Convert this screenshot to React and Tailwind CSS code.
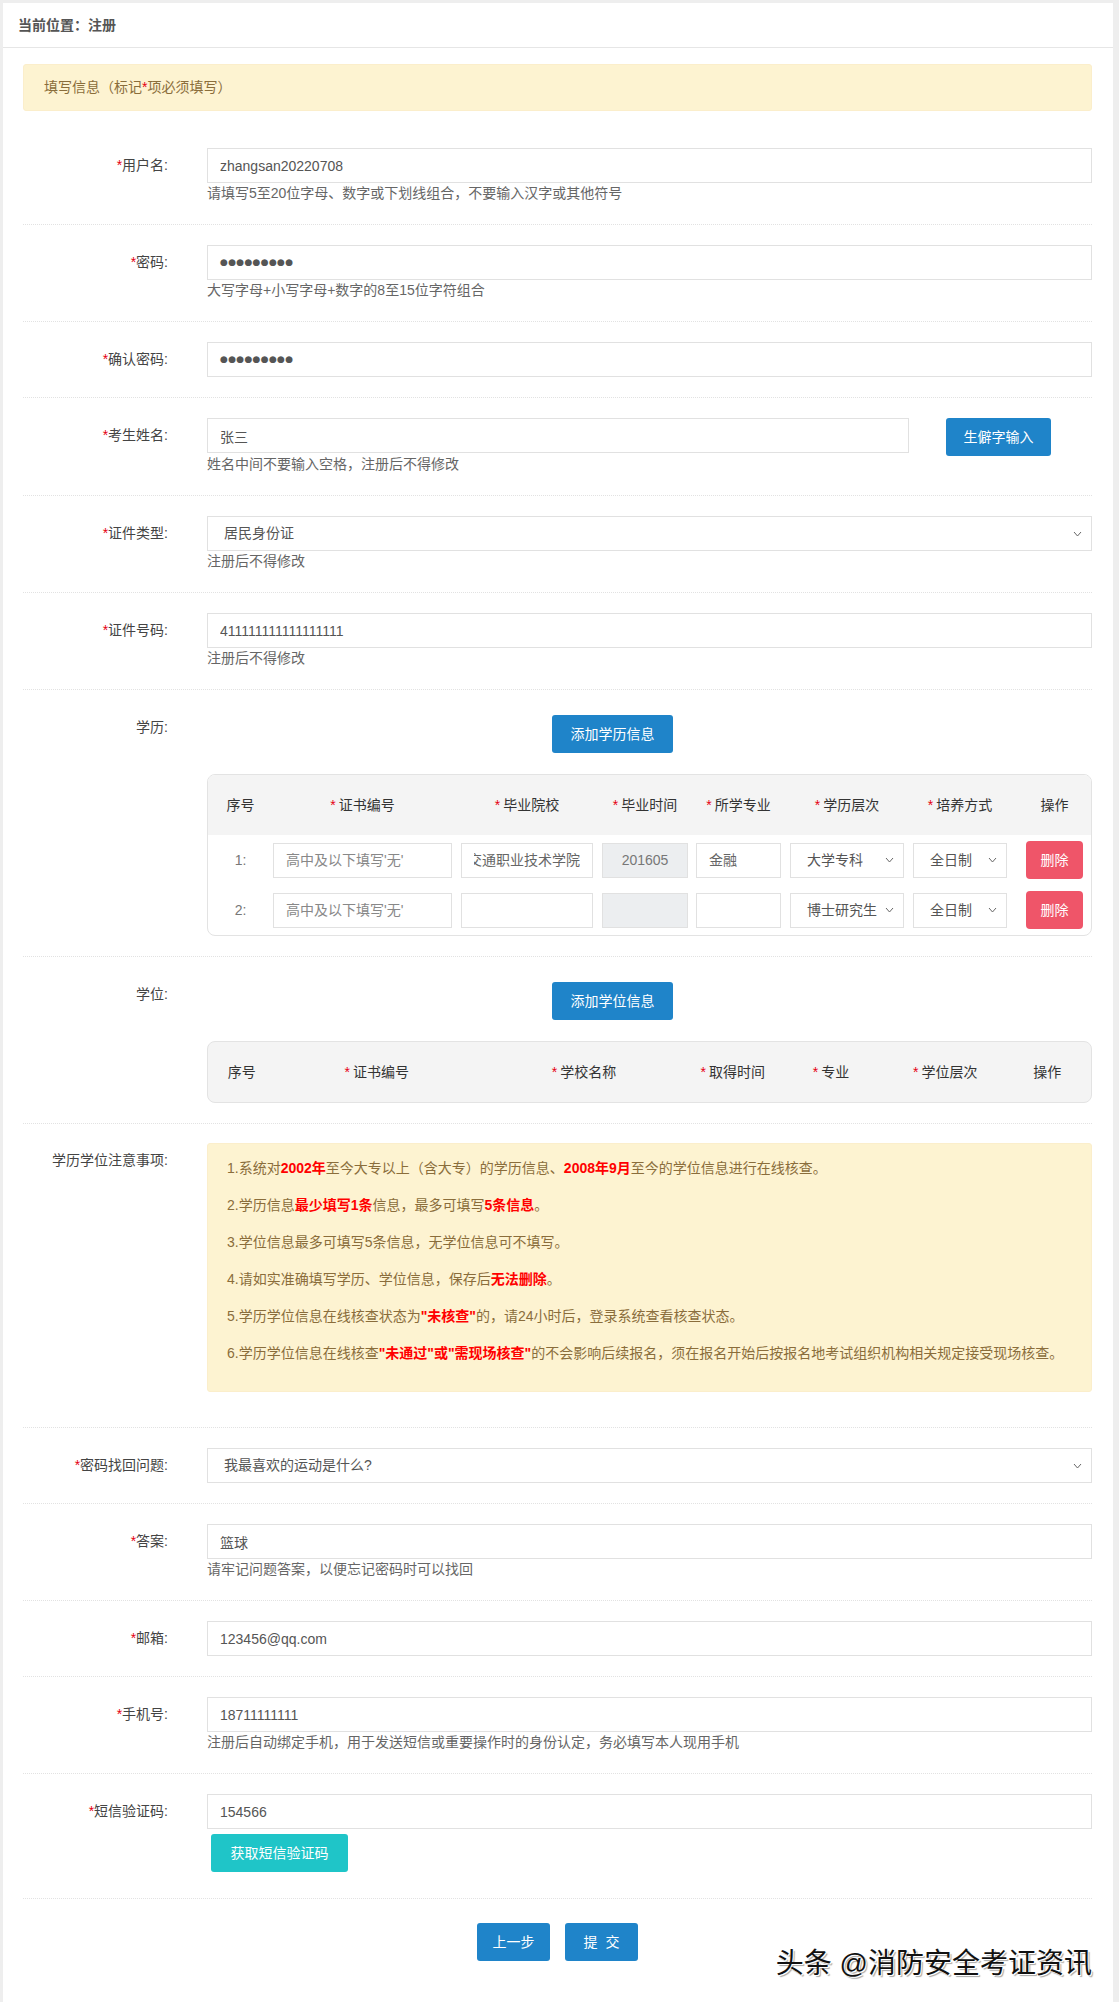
import React from "react";

const font = "font-['Liberation_Sans','Noto_Sans_CJK_SC',sans-serif]";

function Chevron() {
  return (
    <svg width="9" height="6" viewBox="0 0 9 6" className="shrink-0">
      <path d="M1 1l3.5 4L8 1" fill="none" stroke="#666" strokeWidth="1" />
    </svg>
  );
}

function Star({ className = "" }) {
  return <span className={"text-[#e60012] " + className}>*</span>;
}

function Row({ label, required, first, children, pad = "py-5" }) {
  return (
    <div className={"flex " + pad + (first ? "" : " border-t border-dotted border-[#e2e2e2]")}>
      <div className="w-[145px] shrink-0 h-[35px] flex items-center justify-end text-[14px] text-[#444]">
        {required && <Star />}
        {label}:
      </div>
      <div className="ml-[39px] flex-1 min-w-0">{children}</div>
    </div>
  );
}

function TextInput({ value, className = "w-full" }) {
  return (
    <input
      type="text"
      defaultValue={value}
      readOnly
      className={"block h-[35px] border border-[#e1e1e1] px-3 text-[14px] text-[#555] outline-none " + className}
    />
  );
}

function PasswordInput() {
  return (
    <div className="h-[35px] border border-[#e1e1e1] px-3 flex items-center font-['DejaVu_Sans',sans-serif] text-[9px] tracking-[0.3px] text-[#555]">
      ●●●●●●●●●
    </div>
  );
}

function Hint({ children }) {
  return <div className="text-[14px] leading-[21px] text-[#666]">{children}</div>;
}

function SelectBox({ value, className = "w-full", pl = "pl-4" }) {
  return (
    <div className={"h-[35px] border border-[#e1e1e1] flex items-center justify-between pr-[9px] text-[14px] text-[#555] " + pl + " " + className}>
      <span className="whitespace-nowrap">{value}</span>
      <Chevron />
    </div>
  );
}

function BlueButton({ children, className = "" }) {
  return (
    <button className={"h-[38px] rounded-[3px] bg-[#1f84c9] text-white text-[14px] " + className}>
      {children}
    </button>
  );
}

function EduRow({ num, school, time, major, level }) {
  return (
    <div className="flex items-center h-[38px]">
      <div className="w-[65px] text-center text-[14px] text-[#777]">{num}:</div>
      <input
        readOnly
        placeholder="高中及以下填写'无'"
        className="w-[179px] h-[35px] border border-[#e1e1e1] px-3 text-[14px] text-[#555] placeholder:text-[#888] outline-none"
      />
      <div className="w-[132px] ml-[9px] h-[35px] border border-[#e1e1e1] px-3 flex items-center text-[14px] text-[#666]">
        <div className="w-full overflow-hidden flex justify-end whitespace-nowrap">{school}</div>
      </div>
      <div className="w-[86px] ml-[9px] h-[35px] border border-[#e1e1e1] bg-[#eceef0] flex items-center justify-center text-[14px] text-[#777]">
        {time}
      </div>
      <div className="w-[85px] ml-[8px] h-[35px] border border-[#e1e1e1] px-3 flex items-center text-[14px] text-[#666]">
        {major}
      </div>
      <SelectBox value={level} className="w-[114px] ml-[9px]" />
      <SelectBox value="全日制" className="w-[94px] ml-[9px]" />
      <button className="w-[57px] h-[38px] ml-[19px] rounded-[4px] bg-[#ef5569] text-white text-[14px]">删除</button>
    </div>
  );
}

const eduHead = [
  { t: "序号", c: "w-[65px]" },
  { t: "证书编号", c: "w-[179px]", r: true },
  { t: "毕业院校", c: "w-[132px] ml-[9px]", r: true },
  { t: "毕业时间", c: "w-[86px] ml-[9px]", r: true },
  { t: "所学专业", c: "w-[85px] ml-[8px]", r: true },
  { t: "学历层次", c: "w-[114px] ml-[9px]", r: true },
  { t: "培养方式", c: "w-[94px] ml-[9px]", r: true },
  { t: "操作", c: "w-[57px] ml-[19px]" },
];

const degreeHead = [
  { t: "序号", c: "w-[68px]" },
  { t: "证书编号", c: "w-[204px]", r: true },
  { t: "学校名称", c: "w-[214px]", r: true },
  { t: "取得时间", c: "w-[86px]", r: true },
  { t: "专业", c: "w-[112px]", r: true },
  { t: "学位层次", c: "w-[118px]", r: true },
  { t: "操作", c: "w-[88px]" },
];

function HeadCells({ cols }) {
  return cols.map((col) => (
    <div key={col.t} className={"text-center whitespace-nowrap text-[14px] text-[#333] " + col.c}>
      {col.r && <Star className="mr-[3px]" />}
      {col.t}
    </div>
  ));
}

function Red({ children }) {
  return <b className="text-[#ff0000] font-bold">{children}</b>;
}

export default function App() {
  return (
    <div className={"min-h-screen bg-[#eeeeee] pt-[3px] pl-[3px] pr-[6px] " + font}>
      <div className="relative bg-white">
        {/* breadcrumb */}
        <div className="h-[45px] border-b border-[#e6e6e6] px-[15px] flex items-center text-[14px] font-bold text-[#555]">
          当前位置：注册
        </div>

        <div className="px-[20px] pr-[21px]">
          <div className="mt-[16px] mb-[17px] h-[47px] rounded-[3px] bg-[#fdf3d1] border border-[#fbeecb] px-[20px] flex items-center text-[14px] text-[#8a6d3b]">
            填写信息（标记<Star />项必须填写）
          </div>

          <Row label="用户名" required first>
            <TextInput value="zhangsan20220708" />
            <Hint>请填写5至20位字母、数字或下划线组合，不要输入汉字或其他符号</Hint>
          </Row>

          <Row label="密码" required>
            <PasswordInput />
            <Hint>大写字母+小写字母+数字的8至15位字符组合</Hint>
          </Row>

          <Row label="确认密码" required>
            <PasswordInput />
          </Row>

          <Row label="考生姓名" required>
            <div className="flex items-start">
              <TextInput value="张三" className="w-[702px]" />
              <BlueButton className="ml-[37px] w-[105px]">生僻字输入</BlueButton>
            </div>
            <div className="-mt-[2px]">
              <Hint>姓名中间不要输入空格，注册后不得修改</Hint>
            </div>
          </Row>

          <Row label="证件类型" required>
            <SelectBox value="居民身份证" />
            <Hint>注册后不得修改</Hint>
          </Row>

          <Row label="证件号码" required>
            <TextInput value="411111111111111111" />
            <Hint>注册后不得修改</Hint>
          </Row>

          <Row label="学历">
            <BlueButton className="mt-[5px] ml-[345px] w-[121px]">添加学历信息</BlueButton>
            <div className="mt-[21px] border border-[#e3e3e3] rounded-[8px] overflow-hidden">
              <div className="h-[60px] bg-[#f4f4f4] flex items-center">
                <HeadCells cols={eduHead} />
              </div>
              <div className="pt-[6px] pb-[6px] flex flex-col gap-[12px]">
                <EduRow num="1" school="郑州交通职业技术学院" time="201605" major="金融" level="大学专科" />
                <EduRow num="2" school="" time="" major="" level="博士研究生" />
              </div>
            </div>
          </Row>

          <Row label="学位">
            <BlueButton className="mt-[5px] ml-[345px] w-[121px]">添加学位信息</BlueButton>
            <div className="mt-[21px] h-[62px] border border-[#e3e3e3] rounded-[8px] bg-[#f4f4f4] flex items-center">
              <HeadCells cols={degreeHead} />
            </div>
          </Row>

          <Row label="学历学位注意事项" pad="pt-[19px] pb-[35px]">
            <div className="rounded-[3px] bg-[#fdf3d1] border border-[#fbeecb] pl-[19px] pt-[14px] pb-[28px] flex flex-col gap-[17px] text-[14px] leading-[20px] text-[#8a6d3b]">
              <p>1.系统对<Red>2002年</Red>至今大专以上（含大专）的学历信息、<Red>2008年9月</Red>至今的学位信息进行在线核查。</p>
              <p>2.学历信息<Red>最少填写1条</Red>信息，最多可填写<Red>5条信息</Red>。</p>
              <p>3.学位信息最多可填写5条信息，无学位信息可不填写。</p>
              <p>4.请如实准确填写学历、学位信息，保存后<Red>无法删除</Red>。</p>
              <p>5.学历学位信息在线核查状态为<Red>"未核查"</Red>的，请24小时后，登录系统查看核查状态。</p>
              <p>6.学历学位信息在线核查<Red>"未通过"或"需现场核查"</Red>的不会影响后续报名，须在报名开始后按报名地考试组织机构相关规定接受现场核查。</p>
            </div>
          </Row>

          <Row label="密码找回问题" required>
            <SelectBox value="我最喜欢的运动是什么?" />
          </Row>

          <Row label="答案" required>
            <TextInput value="篮球" />
            <Hint>请牢记问题答案，以便忘记密码时可以找回</Hint>
          </Row>

          <Row label="邮箱" required>
            <TextInput value="123456@qq.com" />
          </Row>

          <Row label="手机号" required>
            <TextInput value="18711111111" />
            <Hint>注册后自动绑定手机，用于发送短信或重要操作时的身份认定，务必填写本人现用手机</Hint>
          </Row>

          <Row label="短信验证码" required pad="pt-5 pb-[26px]">
            <TextInput value="154566" />
            <button className="mt-[5px] ml-[4px] w-[137px] h-[38px] rounded-[3px] bg-[#1fc5c8] text-white text-[14px]">
              获取短信验证码
            </button>
          </Row>

          <div className="border-t border-dotted border-[#e2e2e2] pt-[24px] pb-[41px] flex justify-center gap-[15px]">
            <BlueButton className="w-[73px]">上一步</BlueButton>
            <BlueButton className="w-[73px] whitespace-pre">提  交</BlueButton>
          </div>
        </div>

        <div className="absolute right-[21px] bottom-[22px] text-[28px] leading-[32px] text-[#111] [text-shadow:1px_1px_0_#fff,2px_2px_1px_rgba(0,0,0,0.35)]">
          头条 @消防安全考证资讯
        </div>
      </div>
    </div>
  );
}
